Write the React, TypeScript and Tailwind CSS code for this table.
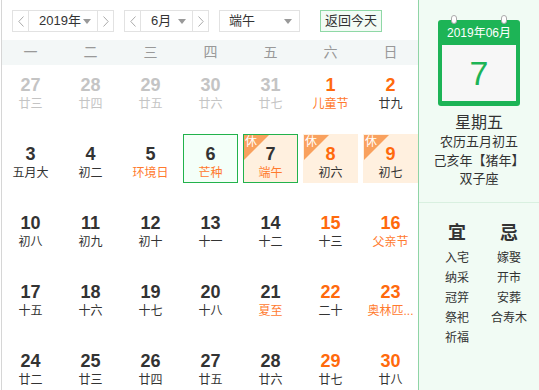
import React from "react";

type Day = {
  n: number;
  lunar: string;
  other?: boolean;
  fest?: boolean;
  rest?: boolean;
  today?: boolean;
  selected?: boolean;
};

const days: Day[] = [
  { n: 27, lunar: "廿三", other: true },
  { n: 28, lunar: "廿四", other: true },
  { n: 29, lunar: "廿五", other: true },
  { n: 30, lunar: "廿六", other: true },
  { n: 31, lunar: "廿七", other: true },
  { n: 1, lunar: "儿童节", fest: true },
  { n: 2, lunar: "廿九" },
  { n: 3, lunar: "五月大" },
  { n: 4, lunar: "初二" },
  { n: 5, lunar: "环境日", fest: true },
  { n: 6, lunar: "芒种", fest: true, today: true },
  { n: 7, lunar: "端午", fest: true, rest: true, selected: true },
  { n: 8, lunar: "初六", rest: true },
  { n: 9, lunar: "初七", rest: true },
  { n: 10, lunar: "初八" },
  { n: 11, lunar: "初九" },
  { n: 12, lunar: "初十" },
  { n: 13, lunar: "十一" },
  { n: 14, lunar: "十二" },
  { n: 15, lunar: "十三" },
  { n: 16, lunar: "父亲节", fest: true },
  { n: 17, lunar: "十五" },
  { n: 18, lunar: "十六" },
  { n: 19, lunar: "十七" },
  { n: 20, lunar: "十八" },
  { n: 21, lunar: "夏至", fest: true },
  { n: 22, lunar: "二十" },
  { n: 23, lunar: "奥林匹...", fest: true },
  { n: 24, lunar: "廿二" },
  { n: 25, lunar: "廿三" },
  { n: 26, lunar: "廿四" },
  { n: 27, lunar: "廿五" },
  { n: 28, lunar: "廿六" },
  { n: 29, lunar: "廿七" },
  { n: 30, lunar: "廿八" },
];

const weekdays = ["一", "二", "三", "四", "五", "六", "日"];
const yi = ["入宅", "纳采", "冠笄", "祭祀", "祈福"];
const ji = ["嫁娶", "开市", "安葬", "合寿木"];

function Chevron({ dir }: { dir: "left" | "right" }) {
  return (
    <svg width="6" height="11" viewBox="0 0 6 11" fill="none">
      <path
        d={dir === "left" ? "M5.5 0.5L0.8 5.5L5.5 10.5" : "M0.5 0.5L5.2 5.5L0.5 10.5"}
        stroke="#aaa"
        strokeWidth="1"
      />
    </svg>
  );
}

function Caret() {
  return (
    <svg width="8" height="5" viewBox="0 0 8 5">
      <path d="M0 0H8L4 5Z" fill="#999" />
    </svg>
  );
}

function Stepper({ label, width }: { label: string; width: string }) {
  return (
    <div className={`flex h-[22px] border border-[#e2e2e2] bg-white ${width}`}>
      <div className="flex w-[16px] items-center justify-center border-r border-[#e2e2e2]">
        <Chevron dir="left" />
      </div>
      <div className="flex flex-1 items-center justify-between pl-[10px] pr-[6px]">
        <span>{label}</span>
        <Caret />
      </div>
      <div className="flex w-[16px] items-center justify-center border-l border-[#e2e2e2]">
        <Chevron dir="right" />
      </div>
    </div>
  );
}

function Cell({ d, col }: { d: Day; col: number }) {
  const weekend = col >= 5;
  let numColor = "text-[#333]";
  if (d.other) numColor = "text-[#c4c4c4]";
  else if (weekend) numColor = "text-[#ff6a0d]";

  let lunarColor = "text-[#333]";
  if (d.other) lunarColor = "text-[#c4c4c4]";
  else if (d.fest) lunarColor = "text-[#ff7a2e]";

  let box = "border border-transparent";
  if (d.today) box = "border border-[#22b24c] bg-[#f4fff8]";
  else if (d.selected) box = "border border-[#22b24c] bg-[#fff0df]";
  else if (d.rest) box = "border border-transparent bg-[#fff0df]";

  return (
    <div className={`relative flex h-[49px] flex-col items-center pt-[9px] ${box}`}>
      {d.rest && (
        <>
          <svg width="25" height="25" viewBox="0 0 25 25" className="absolute left-0 top-0">
            <path d="M0 0H25L0 25Z" fill="#f9a15e" />
          </svg>
          <span className="absolute left-[1px] top-0 text-[12px] leading-[14px] text-white">休</span>
        </>
      )}
      <span className={`text-[18px] font-bold leading-[20px] ${numColor}`}>{d.n}</span>
      <span className={`w-full truncate text-center text-[12px] leading-[18px] ${lunarColor}`}>
        {d.lunar}
      </span>
    </div>
  );
}

export default function App() {
  return (
    <div
      className="flex h-[390px] w-[539px] overflow-hidden bg-white text-[#333]"
      style={{ fontFamily: '"Liberation Sans", "Noto Sans CJK SC", sans-serif' }}
    >
      {/* calendar */}
      <div className="ml-[1px] flex w-[417px] flex-col border-l border-[#d6d6d6]">
        <div className="flex h-[40px] items-start gap-[10px] pl-[10px] pt-[10px] text-[13px] leading-[20px]">
          <Stepper label="2019年" width="w-[102px]" />
          <Stepper label="6月" width="w-[85px]" />
          <div className="flex h-[22px] w-[81px] items-center justify-between border border-[#e2e2e2] pl-[9px] pr-[7px]">
            <span>端午</span>
            <Caret />
          </div>
          <div className="ml-[10px] flex h-[22px] w-[62px] items-center justify-center border border-[#8fd8a6] bg-[#f2fbf5]">
            返回今天
          </div>
        </div>

        <div className="grid h-[25px] grid-cols-[repeat(7,55px)] gap-x-[5px] bg-[#f3f7f7] pl-[1px] text-[14px] leading-[25px] text-[#999]">
          {weekdays.map((w) => (
            <div key={w} className="text-center">
              {w}
            </div>
          ))}
        </div>

        <div className="grid grid-cols-[repeat(7,55px)] gap-x-[5px] gap-y-[20px] pl-[1px]">
          {days.map((d, i) => (
            <Cell key={i} d={d} col={i % 7} />
          ))}
        </div>
      </div>

      {/* side panel */}
      <div className="flex flex-1 flex-col border-l border-[#8fd4a6] bg-[#f1fbf4]">
        <div className="flex h-[203px] flex-col items-center border-b border-[#d9f0e0] pt-[20px]">
          <div className="relative h-[86px] w-[82px] rounded-[3px] bg-[#1db456] px-[4px] pb-[5px]">
            <div className="absolute left-[13px] top-[-5px] h-[9px] w-[6px] rounded-full border border-[#aaa] bg-white" />
            <div className="absolute left-[63px] top-[-5px] h-[9px] w-[6px] rounded-full border border-[#aaa] bg-white" />
            <div className="h-[25px] pt-[4px] text-center text-[12px] leading-[18px] text-white">2019年06月</div>
            <div className="flex h-[56px] items-center justify-center bg-[#f7f7f7] text-[34px] leading-[40px] text-[#1db456]">
              7
            </div>
          </div>
          <div className="mt-[7px] text-[16px] leading-[20px]">星期五</div>
          <div className="text-[13px] leading-[18px]">农历五月初五</div>
          <div className="mt-[1px] text-[13px] leading-[18px]">己亥年【猪年】</div>
          <div className="text-[13px] leading-[18px]">双子座</div>
        </div>

        <div className="flex pl-[12px] pt-[18px]">
          <div className="flex w-[52px] flex-col items-center">
            <div className="mb-[3px] text-[18px] font-bold leading-[24px]">宜</div>
            {yi.map((t) => (
              <div key={t} className="text-[12px] leading-[20px]">
                {t}
              </div>
            ))}
          </div>
          <div className="flex w-[52px] flex-col items-center">
            <div className="mb-[3px] text-[18px] font-bold leading-[24px]">忌</div>
            {ji.map((t) => (
              <div key={t} className="text-[12px] leading-[20px]">
                {t}
              </div>
            ))}
          </div>
        </div>
      </div>
    </div>
  );
}
